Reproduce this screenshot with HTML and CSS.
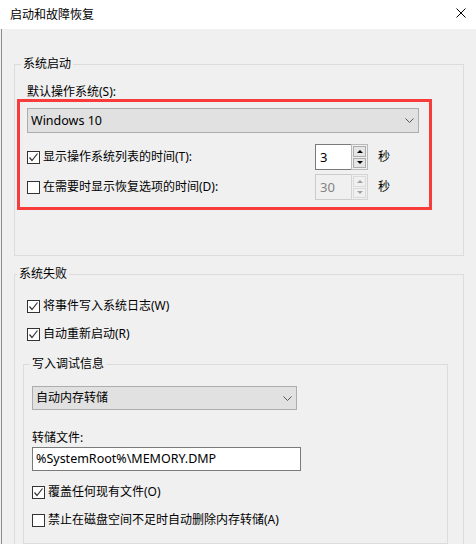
FILE: index.html
```html
<!DOCTYPE html>
<html lang="zh-CN">
<head>
<meta charset="utf-8">
<title>启动和故障恢复</title>
<link rel="stylesheet" href="styles.css">
</head>
<body>
<div class="window">
  <div class="titlebar">
    <span class="title">启动和故障恢复</span>
    <svg class="close" width="10" height="10" viewBox="0 0 10 10"><path d="M0.5 0.5 L9.5 9.5 M9.5 0.5 L0.5 9.5" stroke="#000" stroke-width="1" fill="none"/></svg>
  </div>
  <div class="content">
    <fieldset class="group startup">
      <legend>系统启动</legend>
      <div class="label">默认操作系统(S):</div>
      <div class="select os-select">
        <span class="select-text">Windows 10</span>
        <svg class="chev" width="9" height="5" viewBox="0 0 9 5"><path d="M0.5 0.5 L4.5 4.5 L8.5 0.5" stroke="#555" stroke-width="1" fill="none"/></svg>
      </div>
      <div class="timer-row first">
        <div class="check">
          <span class="box"><svg width="11" height="11" viewBox="0 0 11 11"><path d="M1.5 5.5 L4 8.5 L9.5 1.5" stroke="#333" stroke-width="1.2" fill="none"/></svg></span>
          <span>显示操作系统列表的时间(T):</span>
        </div>
        <div class="spin">
          <div class="spin-input">3</div>
          <div class="spin-btns">
            <span class="spin-btn"><i class="tri up"></i></span>
            <span class="spin-btn"><i class="tri down"></i></span>
          </div>
        </div>
        <span class="unit">秒</span>
      </div>
      <div class="timer-row">
        <div class="check">
          <span class="box"></span>
          <span>在需要时显示恢复选项的时间(D):</span>
        </div>
        <div class="spin disabled">
          <div class="spin-input">30</div>
          <div class="spin-btns">
            <span class="spin-btn"><i class="tri up"></i></span>
            <span class="spin-btn"><i class="tri down"></i></span>
          </div>
        </div>
        <span class="unit">秒</span>
      </div>
    </fieldset>

    <fieldset class="group failure">
      <legend>系统失败</legend>
      <div class="check fail-check">
        <span class="box"><svg width="11" height="11" viewBox="0 0 11 11"><path d="M1.5 5.5 L4 8.5 L9.5 1.5" stroke="#333" stroke-width="1.2" fill="none"/></svg></span>
        <span>将事件写入系统日志(W)</span>
      </div>
      <div class="check fail-check second">
        <span class="box"><svg width="11" height="11" viewBox="0 0 11 11"><path d="M1.5 5.5 L4 8.5 L9.5 1.5" stroke="#333" stroke-width="1.2" fill="none"/></svg></span>
        <span>自动重新启动(R)</span>
      </div>

      <fieldset class="group debug">
        <legend>写入调试信息</legend>
        <div class="select dump-select">
          <span class="select-text">自动内存转储</span>
          <svg class="chev" width="9" height="5" viewBox="0 0 9 5"><path d="M0.5 0.5 L4.5 4.5 L8.5 0.5" stroke="#555" stroke-width="1" fill="none"/></svg>
        </div>
        <div class="label dump-label">转储文件:</div>
        <div class="textbox">%SystemRoot%\MEMORY.DMP</div>
        <div class="check debug-check">
          <span class="box"><svg width="11" height="11" viewBox="0 0 11 11"><path d="M1.5 5.5 L4 8.5 L9.5 1.5" stroke="#333" stroke-width="1.2" fill="none"/></svg></span>
          <span>覆盖任何现有文件(O)</span>
        </div>
        <div class="check debug-check second">
          <span class="box"></span>
          <span>禁止在磁盘空间不足时自动删除内存转储(A)</span>
        </div>
      </fieldset>
    </fieldset>

    <div class="highlight"></div>
  </div>
</div>
</body>
</html>
```

FILE: styles.css
```css
html, body {
  margin: 0;
  padding: 0;
  width: 476px;
  height: 544px;
  overflow: hidden;
  background: #f0f0f0;
}

body {
  font-family: "Noto Sans", "Noto Sans CJK SC", sans-serif;
  font-size: 12px;
  line-height: 16px;
  color: #000;
}

.window {
  height: 544px;
  display: flex;
  flex-direction: column;
}

.titlebar {
  height: 29px;
  flex: none;
  background: #fff;
  display: flex;
  align-items: center;
  padding: 0 10px;
  box-sizing: border-box;
}

.title {
  flex: 1;
  padding-top: 1px;
}

.close {
  display: block;
  margin-top: -3px;
}

.content {
  position: relative;
  flex: 1;
  margin-left: 1px;
  border-left: 1px solid #8c8c8c;
  padding: 27px 0 0 12px;
  overflow: hidden;
}

.group {
  margin: 0;
  min-inline-size: 0;
  border: 1px solid #dcdcdc;
  box-sizing: border-box;
}

.group > legend {
  padding: 0 2px;
  line-height: 16px;
}

.startup {
  width: 450px;
  padding: 12px 0 55px 12px;
}

.startup > legend,
.failure > legend {
  margin-left: -6px;
}

.label {
  height: 16px;
}

.select {
  display: flex;
  align-items: center;
  justify-content: space-between;
  box-sizing: border-box;
  background: #e1e1e1;
  border: 1px solid #adadad;
  padding: 0 4px 0 3px;
}

.select-text {
  white-space: nowrap;
}

.os-select {
  width: 392px;
  height: 25px;
  margin-top: 8px;
  font-size: 12.5px;
}

.chev {
  display: block;
}

.timer-row {
  display: grid;
  grid-template-columns: 278px 53px auto;
  column-gap: 10px;
  align-items: center;
  height: 26px;
  margin-top: 4px;
}

.timer-row.first {
  margin-top: 11px;
}

.check {
  display: flex;
  align-items: center;
  gap: 3px;
  white-space: nowrap;
  height: 16px;
}

.box {
  width: 13px;
  height: 13px;
  box-sizing: border-box;
  border: 1px solid #333;
  background: #fff;
  display: flex;
  align-items: center;
  justify-content: center;
  flex: none;
}

.box svg {
  display: block;
}

.spin {
  display: flex;
  height: 26px;
  box-sizing: border-box;
}

.spin-input {
  flex: 1;
  box-sizing: border-box;
  border: 1px solid #7a7a7a;
  border-right: none;
  background: #fff;
  padding-left: 4px;
  font-size: 13px;
  line-height: 24px;
}

.spin-btns {
  width: 17px;
  box-sizing: border-box;
  border: 1px solid #b9b9b9;
  padding: 1px;
  display: flex;
  flex-direction: column;
  gap: 1px;
}

.spin-btn {
  flex: 1;
  background: #e5e5e5;
  border: 1px solid #adadad;
  display: flex;
  align-items: center;
  justify-content: center;
}

.tri {
  width: 0;
  height: 0;
  border-left: 3px solid transparent;
  border-right: 3px solid transparent;
}

.tri.up {
  border-bottom: 3px solid #000;
}

.tri.down {
  border-top: 3px solid #000;
}

.spin.disabled .spin-input {
  background: #f0f0f0;
  border-color: #cccccc;
  color: #838383;
}

.spin.disabled .spin-btns {
  border-color: #d4d4d4;
}

.spin.disabled .spin-btn {
  background: #f0f0f0;
  border-color: #dadada;
}

.spin.disabled .tri.up {
  border-bottom-color: #a0a0a0;
}

.spin.disabled .tri.down {
  border-top-color: #a0a0a0;
}

.failure {
  width: 450px;
  margin-top: 10px;
  padding: 16px 0 20px 8px;
}

.fail-check {
  padding-left: 4px;
}

.fail-check.second {
  margin-top: 12px;
}

.debug {
  width: 425px;
  margin-top: 14px;
  padding: 14px 0 15px 8px;
}

.debug > legend {
  margin-left: -2px;
}

.dump-select {
  width: 265px;
  height: 24px;
  padding-left: 3px;
  padding-right: 4px;
}

.dump-label {
  margin-top: 20px;
}

.textbox {
  width: 269px;
  height: 24px;
  margin-top: 1px;
  box-sizing: border-box;
  border: 1px solid #7a7a7a;
  background: #fff;
  padding-left: 3px;
  font-size: 12.5px;
  line-height: 22px;
  white-space: nowrap;
}

.debug-check {
  margin-top: 13px;
}

.debug-check.second {
  margin-top: 12px;
}

.highlight {
  position: absolute;
  left: 15px;
  top: 70px;
  width: 415px;
  height: 111px;
  box-sizing: border-box;
  border: 3px solid #f83b3b;
  pointer-events: none;
}
```
